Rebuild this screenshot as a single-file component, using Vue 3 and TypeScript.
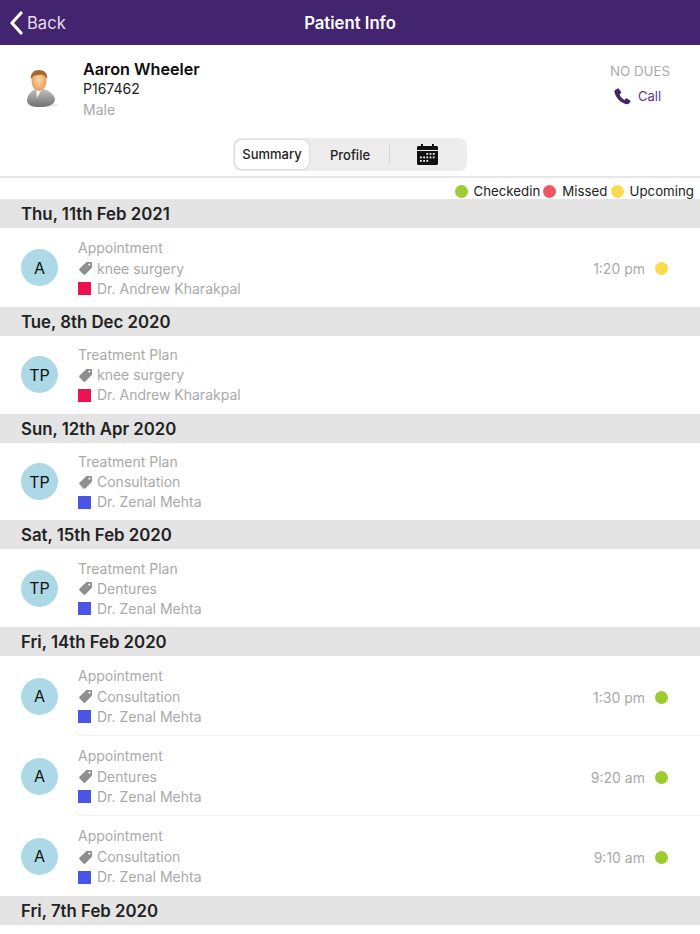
<template>
  <div class="app">
    <header class="topbar">
      <div class="back">
        <svg width="14" height="24" viewBox="0 0 14 24"><path d="M12 2 L3 12 L12 22" fill="none" stroke="#fff" stroke-width="3.2" stroke-linecap="round" stroke-linejoin="round" /></svg>
        <span>Back</span>
      </div>
      <h1>Patient Info</h1>
    </header>

    <section class="patient">
      <svg class="photo" width="36" height="40" viewBox="0 0 36 40">
        <defs>
          <radialGradient id="skin" cx="0.5" cy="0.45" r="0.6">
            <stop offset="0" stop-color="#fcd9a8" />
            <stop offset="1" stop-color="#e8954f" />
          </radialGradient>
          <linearGradient id="suit" x1="0" y1="0" x2="0" y2="1">
            <stop offset="0" stop-color="#c2c2c2" />
            <stop offset="1" stop-color="#6f6f6f" />
          </linearGradient>
        </defs>
        <ellipse cx="20" cy="36" rx="14" ry="2" fill="#ececec" />
        <path d="M2 32 C2 25 7 22 10 20 L18 20 C25 22 30 26 30 31 C28 37 22 38 15 38 C8 38 3 37 2 32 Z" fill="url(#suit)" />
        <path d="M11 20 L17 20 L12 29 Z" fill="#f2f2f2" />
        <ellipse cx="14" cy="12" rx="7.5" ry="10" fill="url(#skin)" />
        <path d="M6 11 C5 4 9 1 14 1 C19 1 23 4 22 10 C20 6 17 5 14 6 C10 6 7 7 6 11 Z" fill="#a5672f" />
      </svg>
      <div class="who">
        <div class="name">Aaron Wheeler</div>
        <div class="pid">P167462</div>
        <div class="gender">Male</div>
      </div>
      <div class="dues">
        <div class="nodues">NO DUES</div>
        <div class="call">
          <svg width="17" height="17" viewBox="0 0 17 17"><path d="M3.6 .6 L1.4 1.8 C.4 2.5 .3 3.7 .7 5 C2 9.8 6.5 14.6 11.6 16 C13 16.4 14.4 16.2 15.2 15.2 L16.4 13.6 C16.7 13.2 16.6 12.7 16.2 12.4 L13 10.4 C12.6 10.2 12.2 10.2 11.9 10.5 L10.6 11.9 C8.5 11 6.4 8.6 5.6 6.4 L7 5.1 C7.3 4.8 7.4 4.4 7.2 4 L5 .9 C4.7 .4 4.1 .3 3.6 .6 Z" fill="#43246f" /></svg>
          <span>Call</span>
        </div>
      </div>
    </section>

    <div class="tabs-wrap">
      <div class="tabs">
        <div class="tab active">Summary</div>
        <div class="tab">Profile</div>
        <div class="sep"></div>
        <div class="cal">
          <svg width="23" height="23" viewBox="0 0 23 23">
            <path d="M2.5 3 H5 V1 H7 V3 H16 V1 H18 V3 H20.5 C21.4 3 22 3.6 22 4.5 V7 H1 V4.5 C1 3.6 1.6 3 2.5 3 Z" fill="#111" />
            <path d="M1 8 H22 V20.5 C22 21.4 21.4 22 20.5 22 H2.5 C1.6 22 1 21.4 1 20.5 Z" fill="#111" />
            <g fill="#eee">
              <rect v-for="d in calDots" :key="d.x + '-' + d.y" :x="d.x" :y="d.y" width="1.8" height="1.8" />
            </g>
          </svg>
        </div>
      </div>
    </div>

    <div class="legend">
      <span class="dot green"></span><span class="lg first">Checkedin</span>
      <span class="dot red"></span><span class="lg">Missed</span>
      <span class="dot yellow"></span><span class="lg">Upcoming</span>
    </div>

    <template v-for="g in groups" :key="g.date">
      <div class="band">{{ g.date }}</div>
      <div
        v-for="(r, i) in g.rows"
        :key="i"
        class="row"
        :class="[r.kind === 'A' ? 'appt' : 'plan', { only: g.rows.length === 1 }]"
      >
        <div class="avatar">{{ r.kind }}</div>
        <div class="body" :class="{ divided: i < g.rows.length - 1 }">
          <div class="info">
            <div class="kind">{{ r.kind === "A" ? "Appointment" : "Treatment Plan" }}</div>
            <div class="line tagline">
              <svg class="tag" width="15" height="15" viewBox="0 0 15 15"><path d="M9 1 H13 C13.6 1 14 1.4 14 2 V6 C14 6.4 13.9 6.7 13.6 7 L7.4 13.4 C6.8 14 6 14 5.4 13.4 L1.6 9.6 C1 9 1 8.2 1.6 7.6 L8 1.4 C8.3 1.1 8.6 1 9 1 Z M11.4 2.6 A1 1 0 1 0 11.41 2.6 Z" fill="#8f8f8f" fill-rule="evenodd" /></svg>
              <span>{{ r.tag }}</span>
            </div>
            <div class="line">
              <span class="swatch" :style="{ background: r.color }"></span>
              <span>{{ r.doctor }}</span>
            </div>
          </div>
          <div v-if="r.time" class="time">
            <span>{{ r.time }}</span>
            <span class="dot" :class="r.status"></span>
          </div>
        </div>
      </div>
    </template>
    <div class="band">Fri, 7th Feb 2020</div>
  </div>
</template>

<script setup lang="ts">
type Row = {
  kind: "A" | "TP";
  tag: string;
  doctor: string;
  color: string;
  time?: string;
  status?: "green" | "yellow";
};
type Group = { date: string; rows: Row[] };

const RED = "#e9134f";
const BLUE = "#4a55e6";

const calDots: { x: number; y: number }[] = [];
for (let y = 0; y < 3; y++) {
  for (let x = 0; x < 5; x++) {
    if (y === 0 && x < 2) continue;
    if (y === 2 && x > 2) continue;
    calDots.push({ x: 4 + x * 3.2, y: 10 + y * 3.5 });
  }
}

const groups: Group[] = [
  {
    date: "Thu, 11th Feb 2021",
    rows: [{ kind: "A", tag: "knee surgery", doctor: "Dr. Andrew Kharakpal", color: RED, time: "1:20 pm", status: "yellow" }],
  },
  {
    date: "Tue, 8th Dec 2020",
    rows: [{ kind: "TP", tag: "knee surgery", doctor: "Dr. Andrew Kharakpal", color: RED }],
  },
  {
    date: "Sun, 12th Apr 2020",
    rows: [{ kind: "TP", tag: "Consultation", doctor: "Dr. Zenal Mehta", color: BLUE }],
  },
  {
    date: "Sat, 15th Feb 2020",
    rows: [{ kind: "TP", tag: "Dentures", doctor: "Dr. Zenal Mehta", color: BLUE }],
  },
  {
    date: "Fri, 14th Feb 2020",
    rows: [
      { kind: "A", tag: "Consultation", doctor: "Dr. Zenal Mehta", color: BLUE, time: "1:30 pm", status: "green" },
      { kind: "A", tag: "Dentures", doctor: "Dr. Zenal Mehta", color: BLUE, time: "9:20 am", status: "green" },
      { kind: "A", tag: "Consultation", doctor: "Dr. Zenal Mehta", color: BLUE, time: "9:10 am", status: "green" },
    ],
  },
];
</script>

<style>
html,
body {
  margin: 0;
  background: #fff;
  overflow: hidden;
}
</style>

<style scoped>
.app {
  width: 700px;
  height: 934px;
  overflow: hidden;
  font-family: Inter, "Noto Sans", sans-serif;
  color: #111;
  background: #fff;
}
.topbar {
  position: relative;
  height: 45px;
  background: #43246f;
  color: #fff;
  display: flex;
  align-items: center;
  justify-content: center;
}
.topbar h1 {
  margin: 0;
  font-size: 16.7px;
  font-weight: 600;
}
.back {
  position: absolute;
  left: 9px;
  top: 11px;
  display: flex;
  align-items: center;
  gap: 4px;
  font-size: 16.6px;
  color: #e6def0;
}
.patient {
  height: 93px;
  display: flex;
  box-sizing: border-box;
  padding: 24px 0 0 25px;
}
.photo {
  flex: none;
}
.who {
  margin-left: 22px;
  margin-top: -10px;
}
.name {
  font-size: 16.2px;
  font-weight: 600;
  line-height: 20px;
  color: #0c0c0c;
}
.pid {
  font-size: 14px;
  line-height: 20px;
  color: #222;
}
.gender {
  font-size: 14px;
  line-height: 20px;
  margin-top: 1px;
  color: #a8a8a8;
}
.dues {
  margin-left: auto;
  margin-right: 30px;
  margin-top: -6px;
  display: flex;
  flex-direction: column;
  align-items: center;
}
.nodues {
  font-size: 13.3px;
  line-height: 16px;
  color: #ababab;
}
.call {
  display: flex;
  align-items: center;
  gap: 7px;
  margin-top: 9px;
  margin-right: 5px;
  font-size: 13px;
  line-height: 17px;
  color: #5b3a8c;
}
.tabs-wrap {
  height: 38px;
  display: flex;
  justify-content: center;
  border-bottom: 2px solid #e6e6e6;
}
.tabs {
  width: 234px;
  height: 33px;
  box-sizing: border-box;
  padding: 2px;
  background: #ededed;
  border-radius: 8px;
  display: flex;
  align-items: center;
}
.tab {
  font-size: 13px;
  font-weight: 500;
  color: #222;
  text-align: center;
}
.tab.active {
  width: 74px;
  height: 29px;
  line-height: 29px;
  background: #fff;
  border-radius: 7px;
  box-shadow: 0 0 2px rgba(0, 0, 0, 0.25);
}
.tab:not(.active) {
  width: 80px;
  box-sizing: border-box;
  padding-left: 2px;
}
.sep {
  width: 1px;
  height: 19px;
  background: #d4d4d4;
}
.cal {
  flex: 1;
  display: flex;
  justify-content: center;
}
.legend {
  height: 21px;
  box-sizing: border-box;
  padding: 5px 6px 0 0;
  display: flex;
  align-items: center;
  justify-content: flex-end;
  font-size: 13.3px;
  color: #222;
}
.lg {
  margin-left: 6px;
}
.lg.first {
  margin-left: 5px;
}
.legend .lg + .dot {
  margin-left: 3px;
}
.dot {
  display: inline-block;
  width: 13px;
  height: 13px;
  border-radius: 50%;
  flex: none;
}
.green {
  background: #9ccc32;
}
.red {
  background: #ee5560;
}
.yellow {
  background: #fdd94e;
}
.band {
  height: 29px;
  line-height: 31px;
  overflow: hidden;
  background: #e4e4e4;
  padding-left: 21px;
  font-size: 16.8px;
  font-weight: 600;
  color: #222;
}
.row {
  display: flex;
  align-items: center;
  padding-left: 21px;
  background: #fff;
}
.row.appt {
  height: 80px;
}
.row.appt.only {
  height: 79px;
}
.row.plan {
  height: 77.7px;
}
.avatar {
  width: 37px;
  height: 37px;
  flex: none;
  border-radius: 50%;
  background: #add8e6;
  display: flex;
  align-items: center;
  justify-content: center;
  font-size: 16px;
  color: #111;
}
.body {
  flex: 1;
  align-self: stretch;
  margin-left: 20px;
  display: flex;
  align-items: center;
  justify-content: space-between;
  padding-right: 32px;
}
.body.divided {
  border-bottom: 1px solid #f1f1f1;
}
.info {
  font-size: 14px;
  color: #a9a9a9;
  line-height: 20px;
  padding-top: 1px;
}
.appt .tagline {
  margin-top: 1px;
}
.line {
  display: flex;
  align-items: center;
  gap: 4px;
}
.tag {
  flex: none;
}
.swatch {
  width: 13px;
  height: 13px;
  margin-right: 2px;
  flex: none;
}
.time {
  display: flex;
  align-items: center;
  gap: 10px;
  padding-top: 3px;
  font-size: 14px;
  color: #a9a9a9;
}
.only .time {
  padding-top: 1px;
}
</style>
